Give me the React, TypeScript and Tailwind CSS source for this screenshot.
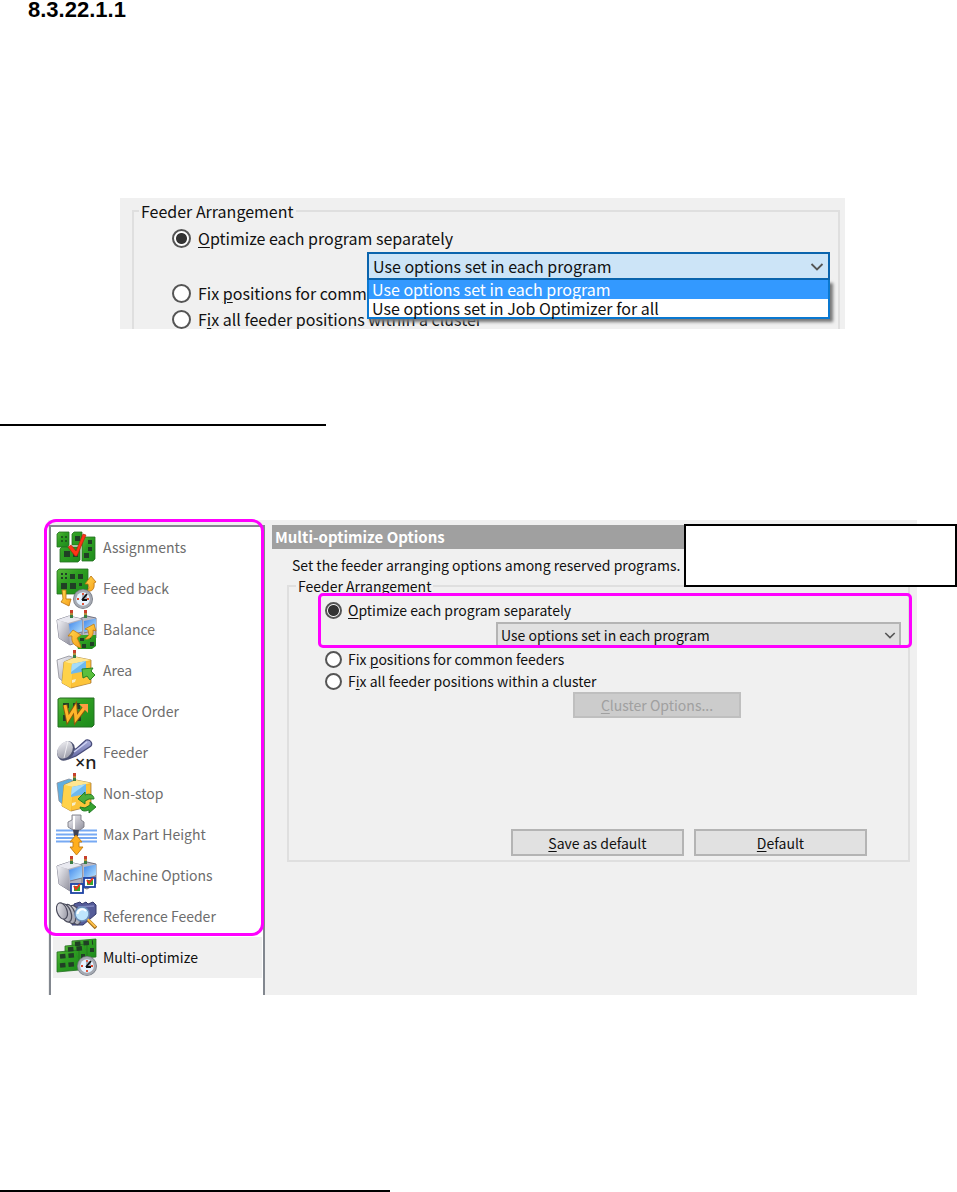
import type { ReactNode } from "react";

function Chevron({ className }: { className: string }) {
  return (
    <svg viewBox="0 0 14 10" className={className} fill="none" stroke="#555" strokeWidth="1.8" aria-hidden="true">
      <path d="M1.5 2 7 7.5 12.5 2" />
    </svg>
  );
}

function Defs() {
  return (
    <svg className="absolute h-0 w-0" aria-hidden="true">
      <defs>
        <linearGradient id="green" x1="0" y1="0" x2="1" y2="1">
          <stop offset="0" stopColor="#58b83a" />
          <stop offset="0.4" stopColor="#2f9f22" />
          <stop offset="1" stopColor="#1d8a1c" />
        </linearGradient>
        <linearGradient id="gold" x1="0" y1="0" x2="1" y2="1">
          <stop offset="0" stopColor="#ffd84e" />
          <stop offset="1" stopColor="#f79f1c" />
        </linearGradient>
        <linearGradient id="steel" x1="0" y1="0" x2="1" y2="1">
          <stop offset="0" stopColor="#f6f6fa" />
          <stop offset="1" stopColor="#8f8f9c" />
        </linearGradient>
        <linearGradient id="glass" x1="0" y1="0" x2="1" y2="1">
          <stop offset="0" stopColor="#3f86ea" />
          <stop offset="1" stopColor="#b8e4ff" />
        </linearGradient>
        <linearGradient id="violet" x1="0" y1="0" x2="0" y2="1">
          <stop offset="0" stopColor="#a9aedb" />
          <stop offset="1" stopColor="#5f649f" />
        </linearGradient>
      </defs>
    </svg>
  );
}

function Icon({ children }: { children: ReactNode }) {
  return (
    <svg viewBox="0 0 41 41" className="h-[41px] w-[41px] shrink-0" aria-hidden="true">
      {children}
    </svg>
  );
}

function Clock({ cx, cy }: { cx: number; cy: number }) {
  return (
    <g transform={`translate(${cx} ${cy})`}>
      <circle r="10" fill="#777c86" />
      <circle r="9.2" fill="#a5a9b2" />
      <circle r="6.8" fill="#e6f3ff" />
      <path d="M0-6v2M0 4v2M-6 0h2M4 0h2" stroke="#e2472a" strokeWidth="1.8" />
      <path d="M-1 1V-4L4-5V1Z" fill="#7d8794" opacity=".6" />
      <path d="M-1 1 4-5M-1 1H4" stroke="#111" strokeWidth="1.8" />
    </g>
  );
}

function Beacon({ x, y }: { x: number; y: number }) {
  return (
    <g>
      <rect x={x} y={y} width="3" height="3" fill="#c8402c" />
      <rect x={x} y={y + 3} width="3" height="2" fill="#b78b3c" />
      <rect x={x} y={y + 5} width="3" height="3" fill="#3b7f45" />
    </g>
  );
}

function TwinMachine() {
  return (
    <g>
      <path d="M23 10 31 7 40 9V29L31 34 23 31Z" fill="#b9b9c4" stroke="#555568" strokeWidth=".8" />
      <path d="M28 12 40 9.500V20L28 23Z" fill="url(#glass)" />
      <path d="M1 11 13 7 26 10V32L14 36 3 29Z" fill="#b2b2bf" stroke="#6a6a7c" strokeWidth=".8" />
      <path d="M1 11 13 7 26 10 12 14Z" fill="#e9e9f0" />
      <path d="M1 11 12 14 14 36 3 29Z" fill="url(#steel)" />
      <path d="M13 15 26 11V23L14 25.500Z" fill="url(#glass)" />
      <path d="M14 26 26 23M28 24 40 21" stroke="#7b7b8d" />
      <Beacon x={14} y={1} />
      <Beacon x={28} y={1} />
    </g>
  );
}

function YellowMachine({ back }: { back: string }) {
  return (
    <g>
      <path d="M1 10 13 6 22 9V30L11 35 3 28Z" fill={back} stroke="#8d8d97" strokeWidth=".8" />
      <path d="M8 12 20 7 35 10V33L15 38 6 33Z" fill="url(#gold)" stroke="#a8823a" strokeWidth=".8" />
      <path d="M8 12 20 7 35 10 17 14Z" fill="#ffe690" />
      <path d="M8 12 17 14 15 38 6 33Z" fill="#ffd24a" />
      <path d="M17 15 34 12V33L16 37Z" fill="#fcc43a" />
      <path d="M16 14 30 11V21L15 24Z" fill="#6eb9ee" />
      <path d="M16 14 30 11 15 22Z" fill="#a5dcfa" />
      <path d="M16 30 20 29 19 32 16 33Z" fill="#f5eecb" />
      <Beacon x={17} y={0} />
    </g>
  );
}

function Chips({ d }: { d: string }) {
  return <path d={d} stroke="#203f25" strokeWidth="4.500" fill="none" strokeDasharray="5.500 3" />;
}

function AssignmentsIcon() {
  return (
    <Icon>
      <g stroke="#246e22" strokeWidth=".8">
        <path d="M1 7 3 5H13V18L11 20H1Z" fill="url(#green)" />
        <path d="M16 7 18 5H26V18H16ZM4 22 6 20H24V33L22 35H4Z" fill="url(#green)" />
        <path d="M26 12 29 10H39V32L37 34H26Z" fill="url(#green)" />
      </g>
      <path d="M5 10h2M9 10h2M5 14h2M9 14h2" stroke="#1d5a1c" strokeWidth="2" />
      <path d="M8 24h6v6H8ZM17 25h5v5h-5ZM32 13h4v4h-4ZM32 20h4v4h-4ZM28 26h5v5h-5ZM19 9h5v5h-5Z" fill="#203f25" />
      <path d="M12 20 15 18 20 24 27 7 30 8 21 29 19 29Z" fill="#ff3517" stroke="#ad1c0a" strokeWidth=".6" />
    </Icon>
  );
}

function FeedbackIcon() {
  return (
    <Icon>
      <path d="M3 1H32V22L28 26H1V3Z" fill="url(#green)" stroke="#246e22" strokeWidth=".8" />
      <path d="M5 6h2M9 6h2M5 10h2M9 10h2" stroke="#203f25" strokeWidth="2" />
      <path d="M14 6h5v5h-5ZM22 6h5v5h-5ZM5 15h6v6H5ZM14 15h6v6h-6ZM23 15h3v3h-3Z" fill="#203f25" />
      <path d="M35 8 40 14 38 15C39 21 36 24 31 23L33 20 32 16 29 16Z" fill="url(#gold)" stroke="#b8700c" strokeWidth=".8" />
      <path d="M6 22H10V31L15 31 13 38 5 34 7 31Z" fill="url(#gold)" stroke="#b8700c" strokeWidth=".8" />
      <Clock cx={27} cy={31} />
    </Icon>
  );
}

function BalanceIcon() {
  return (
    <Icon>
      <TwinMachine />
      <path d="M18 28 24 26H40V37L36 40H22Z" fill="url(#green)" />
      <path d="M24 29h4v3h-4ZM31 27h4v3h-4ZM26 35h4v4h-4ZM34 33h4v4h-4Z" fill="#203f25" />
      <path d="M17 21 12 27H16C15 33 18 37 25 39L24 35 21 29 25 26Z" fill="url(#gold)" stroke="#c37b13" strokeWidth=".8" />
      <path d="M38 15 40 22 37 21C38 27 34 31 29 30L33 26 32 21 29 20Z" fill="url(#gold)" stroke="#c37b13" strokeWidth=".8" />
    </Icon>
  );
}

function AreaIcon() {
  return (
    <Icon>
      <YellowMachine back="url(#steel)" />
      <path d="M26 19 37 18 35 21 39 25 34 30 31 26 27 28Z" fill="#5abf3d" stroke="#258425" strokeWidth="1" />
    </Icon>
  );
}

function PlaceOrderIcon() {
  return (
    <Icon>
      <path d="M2 8 4 7H38V34L36 36H2Z" fill="url(#green)" stroke="#246e22" strokeWidth="1" />
      <path d="M7 12H13V17H7ZM17 12H24V18H17ZM7 24H12V30H7ZM18 25H25V30H18Z" fill="#203f25" />
      <path d="M9 14 12 28 19 17 20 28 29 16" fill="none" stroke="#8c5a0d" strokeWidth="5" />
      <path d="M9 14 12 28 19 17 20 28 29 16" fill="none" stroke="#ffb52a" strokeWidth="3" />
      <path d="M23 13H32V22Z" fill="#ff9c42" />
    </Icon>
  );
}

function FeederIcon() {
  return (
    <Icon>
      <path d="M13 16 20 17 30 8C34 7 37 11 35 14L20 24 12 27Z" fill="url(#violet)" stroke="#474b79" strokeWidth="1.200" />
      <ellipse cx="10" cy="19" rx="8" ry="10.500" transform="rotate(35 10 19)" fill="#4d5272" />
      <ellipse cx="9" cy="18" rx="7" ry="9.500" transform="rotate(35 9 18)" fill="url(#steel)" />
      <path d="M12 9 8 26" stroke="#fff" strokeWidth="1" opacity=".7" />
      <path d="M18 20 31 10" stroke="#cfd3f3" strokeWidth="1.500" />
      <text x="19" y="37" fontFamily="Noto Sans, sans-serif" fontSize="18" fontWeight="500" fill="#222">×n</text>
    </Icon>
  );
}

function NonStopIcon() {
  return (
    <Icon>
      <YellowMachine back="#5faee0" />
      <path d="M22 26 29 19V22C34 20 38 22 38 26L33 26 29 28V31Z" fill="#4cae3a" stroke="#1c761f" strokeWidth=".9" />
      <path d="M40 34 33 40V37C28 39 25 38 24 34L29 35 34 32V29Z" fill="#35a32f" stroke="#1c761f" strokeWidth=".9" />
    </Icon>
  );
}

function HeightIcon() {
  return (
    <Icon>
      <path d="M0 16.500H41M0 20.500H41M0 24H41M0 27.500H41" stroke="#77a9f3" strokeWidth="1.800" />
      <path d="M16 1H25V6L28 8V13L24 16H17L12 13V8L16 6Z" fill="url(#steel)" stroke="#7a7a85" strokeWidth=".9" />
      <path d="M17 16H23L22 22H18Z" fill="#3f4358" />
      <path d="M18 2V15" stroke="#fff" strokeWidth="2" />
      <path d="M20 21 26 28H23V33H27L20.500 41 14 33H17V28H14Z" fill="#ffae1d" stroke="#c37b13" strokeWidth=".9" />
    </Icon>
  );
}

function MachineOptionsIcon() {
  return (
    <Icon>
      <TwinMachine />
      <g fill="#fff" stroke="#1d43a5" strokeWidth="1.800">
        <rect x="28" y="23" width="11" height="9" />
        <rect x="15" y="29" width="12" height="9" />
      </g>
      <path d="M31 25h6v5h-6ZM18 31h6v5h-6Z" fill="#37a72b" />
      <path d="M31 25 33 28 37 23M18 31 20 34 24 29" fill="none" stroke="#e73119" strokeWidth="2" />
    </Icon>
  );
}

function ReferenceFeederIcon() {
  return (
    <Icon>
      <path d="M18 8 24 6 26 8 30 6 32 8 37 6 40 9V18L27 29H16Z" fill="#555c99" stroke="#363b6c" />
      <path d="M22 11 38 10" stroke="#8289c0" strokeWidth="1.300" />
      <g fill="url(#steel)" stroke="#4b4c5c" strokeWidth="1.200">
        <ellipse cx="19" cy="19" rx="5" ry="10" transform="rotate(-20 19 19)" />
        <ellipse cx="14" cy="18" rx="5" ry="10" transform="rotate(-20 14 18)" />
        <ellipse cx="10" cy="17" rx="5" ry="9.500" transform="rotate(-20 10 17)" />
        <ellipse cx="6" cy="15" rx="5" ry="8.500" transform="rotate(-20 6 15)" />
      </g>
      <path d="M32 24 40 32" stroke="#9b6817" strokeWidth="3.500" />
      <path d="M31.500 23 39.500 31" stroke="#ffc14a" strokeWidth="2" />
      <circle cx="26" cy="18" r="7" fill="#bfe6fd" stroke="#6d8fba" strokeWidth="1.500" />
      <path d="M21.500 18C22 13 27 12 30 15" fill="none" stroke="#fff" strokeWidth="2" />
    </Icon>
  );
}

function MultiOptimizeIcon() {
  return (
    <Icon>
      <g stroke="#246e22" strokeWidth=".8" fill="url(#green)">
        <path d="M16 4 40 2V20L16 22Z" />
        <path d="M9 9 31 7V27L9 29Z" />
        <path d="M1 15 23 13V33L1 35Z" />
      </g>
      <Chips d="M19 7 37 5.500" />
      <Chips d="M12 12.500 29 11" />
      <Chips d="M4 19.500 21 18" />
      <Chips d="M4 28.500 21 27" />
      <path d="M34 11h4v4h-4ZM25 17h4v4h-4Z" fill="#203f25" />
      <Clock cx={31} cy={29} />
    </Icon>
  );
}

const pages = [
  { label: "Assignments", icon: <AssignmentsIcon /> },
  { label: "Feed back", icon: <FeedbackIcon /> },
  { label: "Balance", icon: <BalanceIcon /> },
  { label: "Area", icon: <AreaIcon /> },
  { label: "Place Order", icon: <PlaceOrderIcon /> },
  { label: "Feeder", icon: <FeederIcon /> },
  { label: "Non-stop", icon: <NonStopIcon /> },
  { label: "Max Part Height", icon: <HeightIcon /> },
  { label: "Machine Options", icon: <MachineOptionsIcon /> },
  { label: "Reference Feeder", icon: <ReferenceFeederIcon /> },
];

const radioBase =
  "shrink-0 appearance-none rounded-full border-2 border-[#555] bg-white checked:bg-[radial-gradient(circle,#333_0_5px,white_6px)]";

function Key({ children }: { children: ReactNode }) {
  return <span className="underline decoration-1 underline-offset-2">{children}</span>;
}

function DropdownFigure() {
  const row = "flex items-center gap-[7px] pl-[38px]";
  return (
    <figure className="mr-28 ml-[120px] h-[131px] overflow-hidden bg-[#f0f0f0] text-[16px]">
      <fieldset className="mr-[5px] ml-3 border-2 border-[#dfdfdf]">
        <legend className="ml-[5px] px-[2px] leading-[26px]">Feeder Arrangement</legend>
        <label className={`${row} h-7`}>
          <input type="radio" name="arrange-a" defaultChecked className={`${radioBase} h-[19px] w-[19px]`} />
          <span><Key>O</Key>ptimize each program separately</span>
        </label>
        <div className="relative mr-2 ml-auto h-7 w-[463px]">
          <select aria-label="Program options" className="h-7 w-full appearance-none border-2 border-[#0a64ad] bg-[#cce4f7] px-1">
            <option>Use options set in each program</option>
          </select>
          <Chevron className="pointer-events-none absolute top-[10px] right-[6px] h-[10px] w-[14px]" />
          <ul className="absolute top-full left-0 w-full border-2 border-t-0 border-[#0a78d0] bg-white shadow-[3px_3px_3px_#777]">
            <li className="h-[19px] bg-[#3399ff] px-[3px] leading-[19px] text-white">Use options set in each program</li>
            <li className="h-[18px] px-[3px] leading-[18px]">Use options set in Job Optimizer for all</li>
          </ul>
        </div>
        <label className={`${row} h-[26px]`}>
          <input type="radio" name="arrange-a" className={`${radioBase} h-[19px] w-[19px]`} />
          <span>Fix <Key>p</Key>ositions for common feeders</span>
        </label>
        <label className={`${row} h-[26px]`}>
          <input type="radio" name="arrange-a" className={`${radioBase} h-[19px] w-[19px]`} />
          <span>F<Key>i</Key>x all feeder positions within a cluster</span>
        </label>
      </fieldset>
    </figure>
  );
}

function OptionsFigure() {
  const row = "flex items-center gap-[6px] pl-[36px]";
  const radio = `${radioBase} h-[17px] w-[17px]`;
  const button = "border-2 border-[#b4b4b4] bg-[#e1e1e1]";
  return (
    <figure className="relative mr-10 ml-12 flex h-[475px] bg-[#f0f0f0] text-[14px]">
      <nav className="relative mt-[5px] ml-px w-[216px] shrink-0 border-x-2 border-t-2 border-[#82878f] bg-white pr-px pl-[2px]">
        {pages.map((page) => (
          <button key={page.label} className="flex h-[41px] w-full items-center gap-[6px] pl-[3px] text-[#6d6d6d]">
            {page.icon}
            {page.label}
          </button>
        ))}
        <button className="flex h-[41px] w-full items-center gap-[6px] bg-[#f0f0f0] pl-[3px]" aria-current="page">
          <MultiOptimizeIcon />
          Multi-optimize
        </button>
        <div className="pointer-events-none absolute -top-2 -right-px -left-[7px] h-[417px] rounded-xl border-3 border-[#ff00ff]" />
      </nav>
      <section className="min-w-0 flex-1 pt-[5px]">
        <h2 className="mr-[5px] ml-[7px] bg-[#a0a0a0] px-[3px] text-[15px] leading-6 font-bold text-white">
          Multi-optimize Options
        </h2>
        <p className="mt-1 ml-[27px] leading-6">Set the feeder arranging options among reserved programs.</p>
        <fieldset className="mr-[7px] ml-[22px] border-2 border-[#dfdfdf] pb-1">
          <legend className="ml-[7px] px-[2px] leading-[18px]">Feeder Arrangement</legend>
          <div className="relative pt-1">
            <label className={`${row} h-[23px]`}>
              <input type="radio" name="arrange-b" defaultChecked className={radio} />
              <span><Key>O</Key>ptimize each program separately</span>
            </label>
            <div className="relative mr-[7px] ml-auto h-[26px] w-[405px]">
              <select aria-label="Program options" className={`${button} h-[26px] w-full appearance-none px-[3px]`}>
                <option>Use options set in each program</option>
              </select>
              <Chevron className="pointer-events-none absolute top-[9px] right-[5px] h-[9px] w-[12px]" />
            </div>
            <div className="pointer-events-none absolute -top-[2px] -right-1 bottom-0 left-[29px] rounded-[5px] border-3 border-[#ff00ff]" />
          </div>
          <label className={`${row} h-[22px]`}>
            <input type="radio" name="arrange-b" className={radio} />
            <span>Fix <Key>p</Key>ositions for common feeders</span>
          </label>
          <label className={`${row} h-[22px]`}>
            <input type="radio" name="arrange-b" className={radio} />
            <span>F<Key>i</Key>x all feeder positions within a cluster</span>
          </label>
          <button disabled className="ml-[284px] block h-[26px] w-[168px] border-2 border-[#bfbfbf] bg-[#ccc] leading-[20px] text-[#a0a0a0]">
            <Key>C</Key>luster Options...
          </button>
          <div className="mt-[111px] mr-[41px] flex justify-end gap-[10px]">
            <button className={`${button} h-[27px] w-[173px] leading-[20px]`}><Key>S</Key>ave as default</button>
            <button className={`${button} h-[27px] w-[173px] leading-[20px]`}><Key>D</Key>efault</button>
          </div>
        </fieldset>
      </section>
      <div className="absolute top-1 -right-10 h-[63px] w-[273px] border-2 border-black bg-white" />
    </figure>
  );
}

export default function App() {
  return (
    <main className="relative overflow-hidden bg-white font-['Noto_Sans_CJK_JP',sans-serif] text-[#111]">
      <Defs />
      <h1 className="mb-[178px] ml-7 font-['Liberation_Sans',sans-serif] text-[22px] leading-5 font-bold text-black">8.3.22.1.1</h1>
      <DropdownFigure />
      <hr className="mt-[95px] h-0.5 w-[326px] border-0 bg-black" />
      <div className="mt-[94px]">
        <OptionsFigure />
      </div>
      <hr className="mt-[195px] h-0.5 w-[390px] border-0 bg-black" />
    </main>
  );
}
